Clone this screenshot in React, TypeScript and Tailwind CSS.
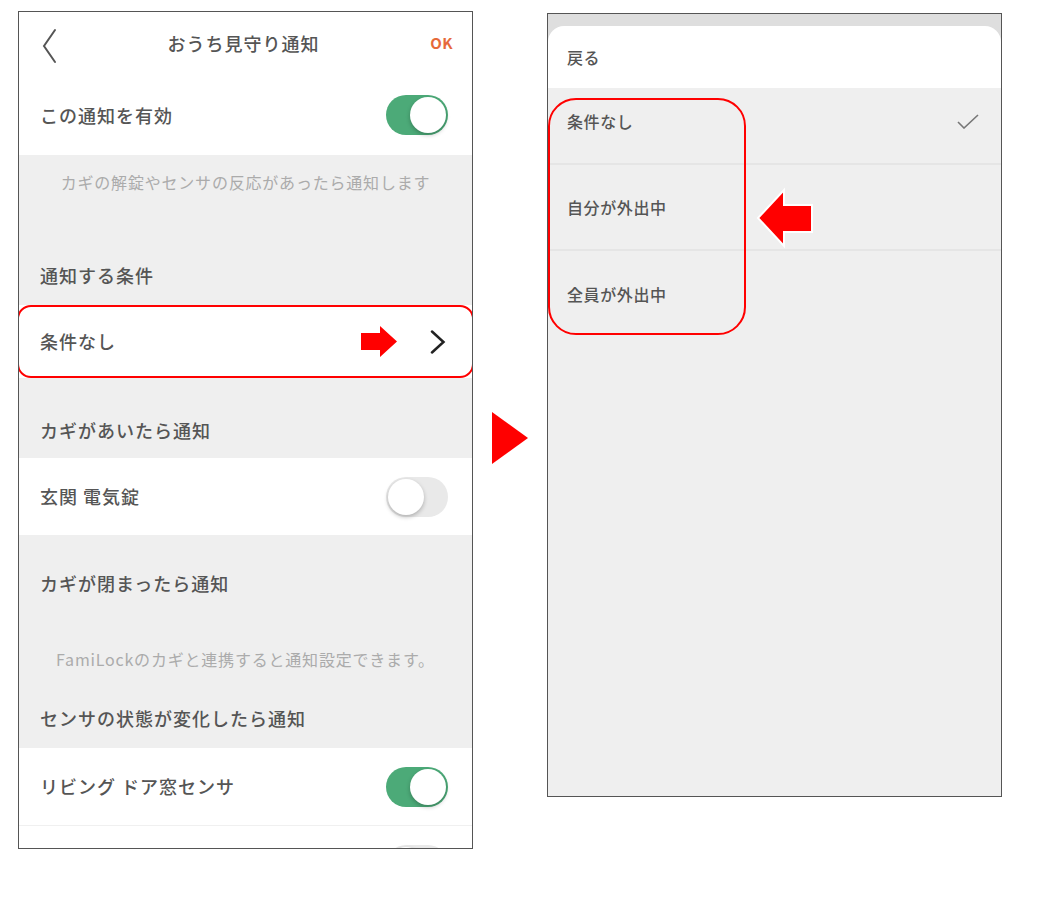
import { ReactNode } from 'react';

const FONT = { fontFamily: '"Noto Sans CJK JP", "Noto Sans", sans-serif' };

function Toggle({ on }: { on: boolean }) {
  return (
    <div
      className={`w-[62px] h-[40px] rounded-full flex items-center px-[2px] shrink-0 ${
        on ? 'bg-[#4caa78] justify-end' : 'bg-[#e9e9e9] justify-start'
      }`}
    >
      <div className="w-[36px] h-[36px] rounded-full bg-white shadow-[0_2px_4px_rgba(0,0,0,0.25)]" />
    </div>
  );
}

function Row({ label, children }: { label: string; children?: ReactNode }) {
  return (
    <div className="h-[77px] bg-white flex items-center justify-between pl-[21px] pr-[24px] shrink-0">
      <span className="text-[18px] tracking-[1px] font-medium text-[#555]">{label}</span>
      {children}
    </div>
  );
}

function Heading({ children }: { children: ReactNode }) {
  return <p className="text-[18px] tracking-[1px] font-medium text-[#555] leading-[24px]">{children}</p>;
}

function Note({ children }: { children: ReactNode }) {
  return <p className="text-[16px] tracking-[0.8px] text-[#ababab] leading-[20px] text-center">{children}</p>;
}

function LeftPhone() {
  return (
    <div className="w-[455px] h-[838px] border-[1.5px] border-[#555] bg-[#efefef] flex flex-col overflow-hidden shrink-0">
      {/* header */}
      <div className="h-[63px] bg-white flex items-center justify-between pl-[22px] pr-[19px] shrink-0">
        <svg width="16" height="36" viewBox="0 0 16 36" className="mt-[4px]">
          <path d="M14 2 L3 18 L14 34" fill="none" stroke="#555" strokeWidth="2" strokeLinecap="round" />
        </svg>
        <span className="text-[18px] tracking-[1px] font-medium text-[#555]">おうち見守り通知</span>
        <span className="text-[15px] font-bold text-[#e6693a] tracking-[0.5px]">OK</span>
      </div>

      <div className="h-[80px] bg-white flex items-center justify-between pl-[21px] pr-[24px] shrink-0">
        <span className="text-[18px] tracking-[1px] font-medium text-[#555]">この通知を有効</span>
        <Toggle on />
      </div>

      <div className="h-[150px] flex flex-col shrink-0">
        <div className="h-[54px] flex items-center justify-center">
          <Note>カギの解錠やセンサの反応があったら通知します</Note>
        </div>
        <div className="flex-1 flex items-end pb-[18px] pl-[21px]">
          <Heading>通知する条件</Heading>
        </div>
      </div>

      <div className="relative h-[73px] bg-white flex items-center justify-between pl-[21px] pr-[26px] shrink-0">
        <span className="text-[18px] tracking-[1px] font-medium text-[#555]">条件なし</span>
        <div className="flex items-center gap-[33px]">
          <svg width="36" height="31" viewBox="0 0 36 31">
            <path d="M0 7 H19 V0 L36 15.5 L19 31 V24 H0 Z" fill="#ff0000" />
          </svg>
          <svg width="16" height="24" viewBox="0 0 16 24">
            <path d="M2 1.5 L13.5 12 L2 22.5" fill="none" stroke="#222" strokeWidth="2.5" strokeLinecap="round" />
          </svg>
        </div>
        <div className="absolute -left-[2px] -right-[2px] top-0 bottom-0 border-2 border-[#ff0000] rounded-[14px]" />
      </div>

      <div className="h-[80px] flex items-end pb-[16px] pl-[21px] shrink-0">
        <Heading>カギがあいたら通知</Heading>
      </div>

      <Row label="玄関 電気錠">
        <Toggle on={false} />
      </Row>

      <div className="h-[213px] flex flex-col pl-[21px] pt-[36px] shrink-0">
        <Heading>カギが閉まったら通知</Heading>
        <div className="mt-[54px] -ml-[21px]">
          <Note>FamiLockのカギと連携すると通知設定できます。</Note>
        </div>
        <div className="mt-[37px]">
          <Heading>センサの状態が変化したら通知</Heading>
        </div>
      </div>

      <Row label="リビング ドア窓センサ">
        <Toggle on />
      </Row>
      <div className="h-px bg-[#f0f0f0] shrink-0" />
      <Row label="">
        <Toggle on={false} />
      </Row>
    </div>
  );
}

function Option({ label, checked, last }: { label: string; checked?: boolean; last?: boolean }) {
  return (
    <div
      className={`flex items-center justify-between pl-[19px] pr-[22px] ${
        last ? 'h-[86px]' : 'h-[86px] border-b-2 border-[#e5e5e5]'
      }`}
    >
      <span className="text-[16px] tracking-[0.6px] font-medium text-[#555]">{label}</span>
      {checked && (
        <svg width="22" height="15" viewBox="0 0 22 15">
          <path d="M1 8 L7 14 L21 1" fill="none" stroke="#777" strokeWidth="1.6" />
        </svg>
      )}
    </div>
  );
}

function RightPhone() {
  return (
    <div className="relative w-[455px] h-[784px] border-[1.5px] border-[#555] bg-[#dedede] flex flex-col overflow-hidden shrink-0">
      <div className="h-[12px] shrink-0" />
      <div className="h-[62px] bg-white rounded-t-[16px] flex items-center pl-[19px] shrink-0">
        <span className="text-[16px] tracking-[0.6px] font-medium text-[#555]">戻る</span>
      </div>
      <div className="flex-1 bg-[#efefef] flex flex-col">
        <div className="-mt-[9px]">
          <Option label="条件なし" checked />
        </div>
        <Option label="自分が外出中" />
        <Option label="全員が外出中" last />
      </div>

      {/* annotation */}
      <div className="absolute left-0 top-[84px] w-[198px] h-[237px] border-2 border-[#ff0000] rounded-[28px]" />
      <svg className="absolute left-[208px] top-[173px]" width="58" height="62" viewBox="0 0 58 62">
        <path
          d="M2 31 L28 3 V18 H56 V45 H28 V59 Z"
          fill="#ff0000"
          stroke="#fff"
          strokeWidth="2"
          strokeLinejoin="miter"
        />
      </svg>
    </div>
  );
}

export default function App() {
  return (
    <div className="w-[1058px] h-[906px] bg-white flex items-start pt-[11px] pl-[18px]" style={FONT}>
      <LeftPhone />
      <svg className="ml-[19px] mt-[401px] shrink-0" width="36" height="52" viewBox="0 0 36 52">
        <path d="M0 0 L36 26 L0 52 Z" fill="#ff0000" />
      </svg>
      <div className="ml-[19px] mt-[2px]">
        <RightPhone />
      </div>
    </div>
  );
}
